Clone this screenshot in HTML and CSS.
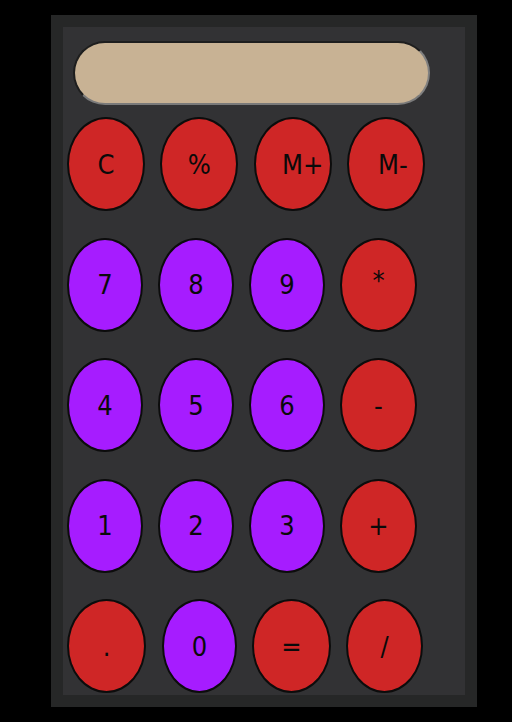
FILE: index.html
```html
<!DOCTYPE html>
<html>
<head>
<meta charset="utf-8">
<link rel="stylesheet" href="styles.css">
</head>
<body>
<div class="calc">
  <div class="face">
    <div class="display"></div>
    <div class="keys">
      <div class="row row-top">
        <div class="key op">C</div>
        <div class="key op">%</div>
        <div class="key op mplus">M+</div>
        <div class="key op mminus">M-</div>
      </div>
      <div class="row">
        <div class="key num">7</div>
        <div class="key num">8</div>
        <div class="key num">9</div>
        <div class="key op w77 star">*</div>
      </div>
      <div class="row">
        <div class="key num">4</div>
        <div class="key num">5</div>
        <div class="key num">6</div>
        <div class="key op w77">-</div>
      </div>
      <div class="row">
        <div class="key num">1</div>
        <div class="key num">2</div>
        <div class="key num">3</div>
        <div class="key op w77">+</div>
      </div>
      <div class="row row-bottom">
        <div class="key op w79">.</div>
        <div class="key num w75">0</div>
        <div class="key op w79">=</div>
        <div class="key op w77">/</div>
      </div>
    </div>
  </div>
</div>
</body>
</html>
```

FILE: styles.css
```css
html, body {
  margin: 0;
  padding: 0;
  background: #000;
}

body {
  width: 512px;
  height: 722px;
  overflow: hidden;
}

.calc {
  margin: 15px 0 0 51px;
  width: 426px;
  height: 692px;
  box-sizing: border-box;
  padding: 12px;
  background: #262727;
}

.face {
  width: 402px;
  height: 668px;
  background: #323234;
  display: flex;
  flex-direction: column;
}

.display {
  margin: 14px 0 0 10px;
  width: 357px;
  height: 64px;
  box-sizing: border-box;
  border-radius: 32px;
  background: #c8b294;
  border: 2px solid;
  border-color: #1e1e1e #808080 #7a7a7a #1e1e1e;
}

.keys {
  margin: 12px 0 0 4px;
  display: flex;
  flex-direction: column;
  gap: 26.5px;
}

.row {
  display: flex;
  gap: 15px;
  height: 94px;
}

.row-top {
  gap: 15.3px;
}

.key {
  box-sizing: border-box;
  height: 94px;
  border-radius: 50%;
  border: 2px solid #0c0c0c;
  display: flex;
  align-items: center;
  justify-content: center;
  font-family: "Liberation Sans Narrow", "DejaVu Sans Condensed", "Liberation Sans", sans-serif;
  font-size: 27px;
  color: #0a0a0a;
}

.num {
  width: 76px;
  background: #a61cff;
}

.op {
  width: 78px;
  background: #cf2626;
}

.w75 { width: 75px; }
.w77 { width: 77px; }
.w79 { width: 79px; }

.row-bottom .w75 { margin-left: 1px; }

.mplus {
  padding-left: 20px;
}

.mminus {
  padding-left: 14px;
}

.star {
  padding-bottom: 8px;
}
```
